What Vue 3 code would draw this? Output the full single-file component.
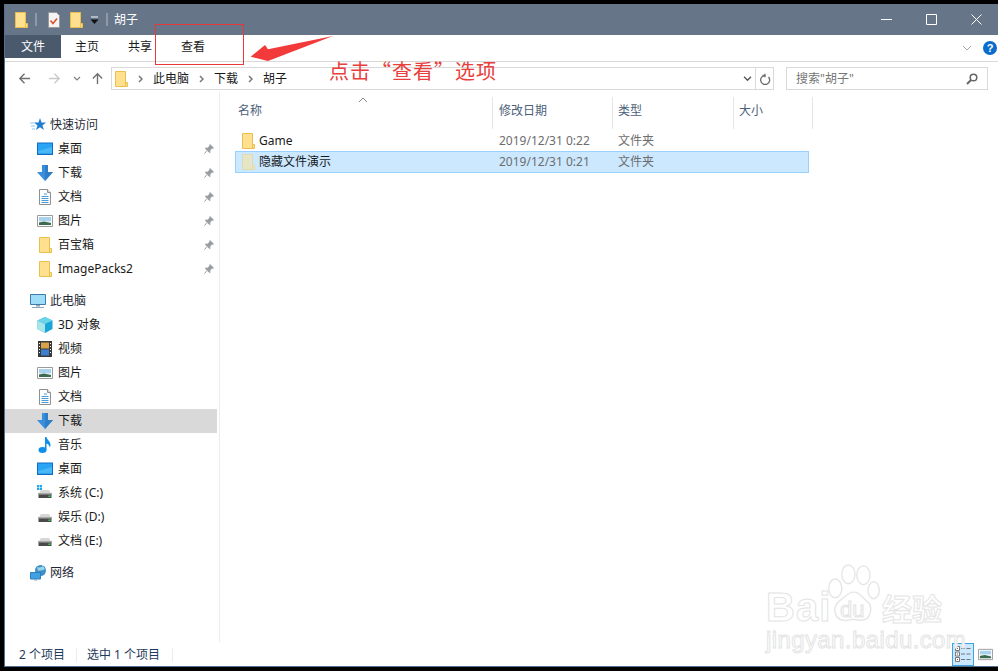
<script setup>
const quick = [
  { icon: 'desktop', label: '桌面' },
  { icon: 'down', label: '下载' },
  { icon: 'doc', label: '文档' },
  { icon: 'pic', label: '图片' },
  { icon: 'folder', label: '百宝箱' },
  { icon: 'folder', label: 'ImagePacks2' },
]
const pc = [
  { icon: 'cube', label: '3D 对象' },
  { icon: 'film', label: '视频' },
  { icon: 'pic', label: '图片' },
  { icon: 'doc', label: '文档' },
  { icon: 'down', label: '下载', active: true },
  { icon: 'music', label: '音乐' },
  { icon: 'desktop', label: '桌面' },
  { icon: 'sysdrive', label: '系统 (C:)' },
  { icon: 'drive', label: '娱乐 (D:)' },
  { icon: 'drive', label: '文档 (E:)' },
]
const files = [
  { name: 'Game', date: '2019/12/31 0:22', type: '文件夹' },
  { name: '隐藏文件演示', date: '2019/12/31 0:21', type: '文件夹', selected: true },
]
const crumbs = ['此电脑', '下载', '胡子']
</script>

<template>
  <div class="page">
    <svg class="defs" width="0" height="0">
      <defs>
        <symbol id="folder" viewBox="0 0 16 16">
          <path d="M2.5.5h10v15h-10z" fill="#ffe08e" stroke="#e9c04e" />
          <path d="M12.5 11.5h2v4h-2z" fill="#ffe08e" stroke="#e9c04e" />
        </symbol>
        <symbol id="folderHidden" viewBox="0 0 16 16">
          <path d="M2.5.5h10v15h-10z" fill="#e6e6c6" stroke="#dcdcb4" />
          <path d="M12.5 11.5h2v4h-2z" fill="#e6e6c6" stroke="#e4dca0" />
        </symbol>
        <symbol id="desktop" viewBox="0 0 16 16">
          <path d="M0 1.5h16v12.5H0z" fill="#0f6fc6" />
          <path d="M1 2.5h14v10H1z" fill="#2aa4f4" />
          <path d="M1 10l14-4v6.500H1z" fill="#49b8f8" />
        </symbol>
        <symbol id="down" viewBox="0 0 16 16">
          <path d="M5 0h6v7h5l-8 9-8-9h5z" fill="#3a8fdc" />
          <path d="M8 0h3v7h5l-8 9z" fill="#2f7ec8" />
        </symbol>
        <symbol id="doc" viewBox="0 0 16 16">
          <path d="M2.500.5h8l3 3v12h-11z" fill="#fff" stroke="#8f8f8f" />
          <path d="M10.500.5v3h3" fill="#e4e4e4" stroke="#8f8f8f" />
          <path d="M7 5h3M4.500 7.500h7M4.500 9.500h7M4.500 11.500h7M4.500 13.500h7" stroke="#4a9bd8" />
        </symbol>
        <symbol id="pic" viewBox="0 0 16 16">
          <path d="M.5 2.500h15v11H.5z" fill="#fff" stroke="#9a9a9a" />
          <path d="M2 4h12v4H2z" fill="#a9d2ee" />
          <path d="M2 8h12v1.500H2z" fill="#dfeef2" />
          <path d="M2 9.500l5-1 7 1.500v2H2z" fill="#3d6b4f" />
        </symbol>
        <symbol id="cube" viewBox="0 0 16 16">
          <path d="M8 0l7.500 3.500v8.500L8 16 .5 12V3.500z" fill="#1aa5d8" />
          <path d="M8 7L.5 3.500V12L8 16z" fill="#a8e6ec" />
          <path d="M8 0l7.500 3.500L8 7 .5 3.500z" fill="#6bd4e8" />
        </symbol>
        <symbol id="film" viewBox="0 0 16 16">
          <path d="M1 0h14v16H1z" fill="#3a3a3a" />
          <path d="M4 1.500h8v6H4z" fill="#d8a24a" />
          <path d="M4 8.500h8v6H4z" fill="#3f7fd0" />
          <path d="M2 2h1v1H2zM2 5h1v1H2zM2 8h1v1H2zM2 11h1v1H2zM13 2h1v1h-1zM13 5h1v1h-1zM13 8h1v1h-1zM13 11h1v1h-1z" fill="#fff" />
        </symbol>
        <symbol id="music" viewBox="0 0 16 16">
          <ellipse cx="5.500" cy="13" rx="4" ry="3" fill="#0f8fe8" />
          <path d="M8 0h1.500c.5 3 4 4 4 8 0 1-.5 2-1 2.500.3-2-1.500-3.500-3-4V13H8z" fill="#0f8fe8" />
        </symbol>
        <symbol id="drive" viewBox="0 0 16 16">
          <path d="M2 8l2-3h8l2 3z" fill="#d6d6d6" />
          <path d="M1.500 8h13v5h-13z" fill="#4a4a4a" />
          <path d="M1.500 8h13v1.500h-13z" fill="#a8a8a8" />
          <path d="M11.500 10.500h2v1.500h-2z" fill="#3ecf5a" />
        </symbol>
        <symbol id="sysdrive" viewBox="0 0 16 16">
          <path d="M2 8l2-3h8l2 3z" fill="#d6d6d6" />
          <path d="M1.500 8h13v5h-13z" fill="#4a4a4a" />
          <path d="M1.500 8h13v1.500h-13z" fill="#a8a8a8" />
          <path d="M11.500 10.500h2v1.500h-2z" fill="#3ecf5a" />
          <path d="M0 0h2.200v2.200H0zM2.800 0H5v2.200H2.800zM0 2.800h2.200V5H0zM2.800 2.800H5V5H2.800z" fill="#1ea7ee" />
        </symbol>
        <symbol id="star" viewBox="0 0 16 16">
          <path d="M10 1l1.500 4.500H16l-3.600 2.900L14 13l-4-2.800L6 13l1.500-4.600L4 5.500h4.500z" fill="#1e7fd0" />
          <path d="M0 6h4M1 9h4M2 12h3" stroke="#8ccbf4" />
        </symbol>
        <symbol id="monitor" viewBox="0 0 16 16">
          <path d="M.500 1.500h15v10H.500z" fill="#9fdcf8" stroke="#3f7da8" />
          <path d="M6 12h4v1.500H6zM2 14h12v1H2z" fill="#8ea3b5" />
        </symbol>
        <symbol id="net" viewBox="0 0 16 16">
          <circle cx="10.500" cy="5.500" r="5.500" fill="#3d8fc8" />
          <path d="M7 2c2 1 5 0 6-1l2 3c-2 2-5 1-7 2z" fill="#9bd2ea" />
          <path d="M.500 7.500h10v6.500H.500z" fill="#3fa0e4" stroke="#2f7fb8" />
          <path d="M4 14.500h3v1H4z" fill="#8ea3b5" />
        </symbol>
        <symbol id="pin" viewBox="0 0 10 10">
          <path d="M6 0l4 4-1 .800-.800-.300L6.200 6.500 6.500 8.500 5.500 9 1 4.500 1.500 3.500 3.500 3.800 5.500 1.800 5.200 1z" fill="#9a9ea3" />
          <path d="M3 6.500L.500 9.500" stroke="#9a9ea3" />
        </symbol>
      </defs>
    </svg>

    <div class="window">
      <header class="titlebar">
        <svg class="ti first"><use href="#folder" /></svg>
        <span class="tsep"></span>
        <svg class="ti doc" viewBox="0 0 12 16">
          <path d="M.5.5h8l3 3v12H.500z" fill="#f4f4f4" stroke="#999" />
          <path d="M2.500 8.500l2.500 3 4-5" fill="none" stroke="#d8502a" stroke-width="1.500" />
        </svg>
        <svg class="ti fold2"><use href="#folder" /></svg>
        <svg class="drop" viewBox="0 0 9 9">
          <path d="M1 1h7" stroke="#fff" />
          <path d="M.5 3.500h8l-4 4.500z" fill="#111" />
        </svg>
        <span class="tsep sep2"></span>
        <span class="ttext">胡子</span>
        <div class="winctl">
          <svg viewBox="0 0 11 11"><path d="M0 5.500h11" stroke="#fff" /></svg>
          <svg viewBox="0 0 11 11"><path d="M.5.500h10v10H.500z" fill="none" stroke="#fff" /></svg>
          <svg viewBox="0 0 11 11"><path d="M.5.500l10 10M10.500.500l-10 10" stroke="#fff" /></svg>
        </div>
      </header>

      <nav class="ribbon">
        <span class="tab file">文件</span>
        <span class="tab home">主页</span>
        <span class="tab share">共享</span>
        <span class="tab view">查看</span>
        <svg class="rib-chev" viewBox="0 0 10 6"><path d="M1 1l4 4 4-4" fill="none" stroke="#a8a8a8" /></svg>
        <span class="help">?</span>
      </nav>

      <div class="addrbar">
        <svg class="nav back" viewBox="0 0 14 14"><path d="M13 7H2M7 2L2 7l5 5" fill="none" stroke="#6f6f6f" stroke-width="1.500" /></svg>
        <svg class="nav fwd" viewBox="0 0 14 14"><path d="M1 7h11M7 2l5 5-5 5" fill="none" stroke="#c9c9c9" stroke-width="1.500" /></svg>
        <svg class="nav-ch" viewBox="0 0 8 6"><path d="M1 1l3 3 3-3" fill="none" stroke="#7f7f7f" stroke-width="1.200" /></svg>
        <svg class="nav up" viewBox="0 0 14 14"><path d="M7 13V2M2 7l5-5 5 5" fill="none" stroke="#6f6f6f" stroke-width="1.500" /></svg>

        <div class="addr">
          <svg class="addr-f"><use href="#folder" /></svg>
          <template v-for="c in crumbs" :key="c">
            <svg class="crumb-ch" viewBox="0 0 5 8"><path d="M1 1l3 3-3 3" fill="none" stroke="#777" stroke-width="1.500" /></svg>
            <span class="crumb">{{ c }}</span>
          </template>
          <svg class="addr-dd" viewBox="0 0 10 7"><path d="M1 1l4 4 4-4" fill="none" stroke="#555" stroke-width="1.600" /></svg>
          <span class="addr-div">
            <svg viewBox="0 0 12 12"><path d="M9.500 3.500A4.500 4.500 0 1 1 6 2H3.500M6 .2v3.600" transform="translate(0 .5)" fill="none" stroke="#6b6b6b" stroke-width="1.300" /></svg>
          </span>
        </div>

        <div class="search">
          <span>搜索"胡子"</span>
          <svg viewBox="0 0 12 12"><circle cx="7.500" cy="4.500" r="3.300" fill="none" stroke="#666" stroke-width="1.500" /><path d="M5 7l-4 4" stroke="#666" stroke-width="2" /></svg>
        </div>
      </div>

      <div class="main">
        <aside class="side">
          <div class="head"><svg class="hi"><use href="#star" /></svg>快速访问</div>
          <div v-for="r in quick" :key="r.label" class="row">
            <svg class="ri"><use :href="'#' + r.icon" /></svg>
            <span class="rt">{{ r.label }}</span>
            <svg class="pin"><use href="#pin" /></svg>
          </div>
          <div class="head gap"><svg class="hi"><use href="#monitor" /></svg>此电脑</div>
          <div v-for="r in pc" :key="r.icon + r.label" class="row" :class="{ active: r.active }">
            <svg class="ri"><use :href="'#' + r.icon" /></svg>
            <span class="rt">{{ r.label }}</span>
          </div>
          <div class="head gap"><svg class="hi"><use href="#net" /></svg>网络</div>
        </aside>

        <section class="list">
          <div class="cols">
            <span class="c-name">名称<svg class="sort" viewBox="0 0 10 6"><path d="M1 5l4-4 4 4" fill="none" stroke="#8a8a8a" /></svg></span>
            <span class="c-date">修改日期</span>
            <span class="c-type">类型</span>
            <span class="c-size">大小</span>
          </div>
          <div class="files">
            <div v-for="f in files" :key="f.name" class="file-row" :class="{ sel: f.selected }">
              <svg class="fi"><use :href="f.selected ? '#folderHidden' : '#folder'" /></svg>
              <span class="f-name">{{ f.name }}</span>
              <span class="f-date">{{ f.date }}</span>
              <span class="f-type">{{ f.type }}</span>
            </div>
          </div>
        </section>
      </div>

      <footer class="status">
        <span class="s1">2 个项目</span>
        <span class="s2">选中 1 个项目</span>
        <div class="views">
          <span class="v-on">
            <svg viewBox="0 0 16 18">
              <path d="M.5 1.500h4v4h-4zM.5 7h4v4h-4zM.5 12.500h4v4h-4z" fill="#fff" stroke="#777" />
              <path d="M2 3h1v1H2zM2 8.500h1v1H2z" fill="#555" />
              <path d="M2 14h1v1H2z" fill="#d22" />
              <path d="M6 3.500h4M11.500 3.500h4M6 9h4M11.500 9h4M6 14.500h4M11.500 14.500h4" stroke="#777" />
            </svg>
          </span>
          <svg class="v-off"><use href="#pic" /></svg>
        </div>
      </footer>
    </div>

    <div class="redbox"></div>
    <svg class="arrow" viewBox="0 0 84 28"><path d="M.7 21.700L15 10l3 4.300L83 1 18 26z" fill="#f23a3a" /></svg>
    <div class="note">点击“查看”选项</div>

    <div class="mark">
      <span class="bai">Bai</span>
      <svg class="paw" viewBox="0 0 60 64">
        <g fill="none" stroke="#e6e6e6" stroke-width="1.500">
          <ellipse cx="10" cy="26" rx="7" ry="10" />
          <ellipse cx="24" cy="11" rx="7" ry="10" />
          <ellipse cx="40" cy="12" rx="7" ry="10" />
          <ellipse cx="51" cy="28" rx="6" ry="9" />
          <path d="M30 30c6 0 8 5 13 9 8 6 6 21-6 21-3 0-5-1-8-1s-6 2-10 1C9 59 6 46 15 39c6-4 8-9 15-9z" />
        </g>
      </svg>
      <span class="du">du</span>
      <span class="jy">经验</span>
      <span class="url">jingyan.baidu.com</span>
    </div>
  </div>
</template>

<style scoped>
.page {
  position: relative;
  width: 998px;
  height: 671px;
  background: #000;
  padding: 4px 0 4px 4px;
  box-sizing: border-box;
  overflow: hidden;
  font: 12px/1 "Noto Sans", "Noto Sans CJK SC", sans-serif;
  color: #1a1a1a;
}
.defs { position: absolute; }
.window {
  height: 663px;
  display: flex;
  flex-direction: column;
  background: #fff;
  border-left: 1px solid #55708f;
  border-bottom: 1px solid #55708f;
  box-sizing: border-box;
}
.titlebar {
  height: 31px;
  flex: none;
  display: flex;
  align-items: center;
  background: #667588;
  color: #fff;
  padding-left: 8px;
}
.ti { width: 16px; height: 16px; flex: none; }
.first { margin-top: 1px; }
.tsep { width: 2px; height: 13px; background: #8d99a8; margin-left: 6px; flex: none; }
.doc { width: 12px; margin-left: 11px; }
.fold2 { margin-left: 8px; margin-top: 1px; }
.drop { width: 9px; height: 9px; margin-left: 6px; margin-top: 1px; }
.sep2 { margin-left: 7px; }
.ttext { margin-left: 6px; font-size: 12px; color: #fff; }
.winctl { margin-left: auto; display: flex; gap: 34px; padding-right: 16px; }
.winctl svg { width: 11px; height: 11px; display: block; }

.ribbon {
  height: 27px;
  flex: none;
  display: flex;
  align-items: flex-start;
  border-bottom: 1px solid #d9d9d9;
  box-sizing: border-box;
  position: relative;
}
.tab { height: 23px; line-height: 24px; text-align: center; flex: none; }
.file { width: 56px; background: #4a5a6c; color: #fff; }
.home { width: 52px; }
.share { width: 54px; }
.view { width: 52px; }
.rib-chev { width: 10px; height: 6px; margin: 10px 0 0 auto; }
.help {
  width: 14px;
  height: 14px;
  margin: 6px 1px 0 11px;
  border-radius: 50%;
  background: #0a6ccc;
  color: #fff;
  font: bold 11px/14px "Liberation Sans", sans-serif;
  text-align: center;
}

.addrbar {
  height: 30px;
  flex: none;
  display: flex;
  align-items: flex-start;
  padding-top: 5px;
  box-sizing: border-box;
  position: relative;
}
.nav { width: 13px; height: 13px; flex: none; margin-top: 5px; }
.back { margin-left: 13px; }
.fwd { margin-left: 17px; }
.nav-ch { width: 8px; height: 6px; margin: 9px 0 0 12px; flex: none; }
.up { margin-left: 10px; }
.addr {
  width: 663px;
  height: 23px;
  margin-left: 7px;
  border: 1px solid #d9d9d9;
  box-sizing: border-box;
  display: flex;
  align-items: center;
  flex: none;
}
.addr-f { width: 16px; height: 16px; margin: 0 -1px 0 1px; flex: none; }
.crumb-ch { width: 5px; height: 8px; margin-left: 10px; flex: none; }
.crumb { margin-left: 10px; }
.addr-dd { width: 9px; height: 6px; margin-left: auto; margin-right: 3px; }
.addr-div {
  width: 17px;
  height: 21px;
  border-left: 1px solid #d9d9d9;
  display: flex;
  align-items: center;
  justify-content: center;
}
.addr-div svg { width: 12px; height: 12px; }
.search {
  width: 202px;
  height: 23px;
  margin-left: 12px;
  border: 1px solid #d9d9d9;
  box-sizing: border-box;
  display: flex;
  align-items: center;
  justify-content: space-between;
  padding: 0 9px 0 9px;
  color: #777;
  flex: none;
}
.search svg { width: 12px; height: 12px; }

.main { flex: 1; display: flex; min-height: 0; }
.side {
  width: 215px;
  flex: none;
  box-sizing: border-box;
  border-right: 1px solid #ececec;
  padding-top: 21px;
}
.head {
  height: 24px;
  display: flex;
  align-items: center;
  padding-left: 25px;
  color: #1f2a36;
}
.head.gap { margin-top: 8px; }
.hi { width: 16px; height: 16px; margin-right: 4px; flex: none; }
.row {
  height: 24px;
  width: 212px;
  display: flex;
  align-items: center;
  padding-left: 32px;
  box-sizing: border-box;
  color: #1a1a1a;
}
.row.active { background: #d9d9d9; }
.ri { width: 16px; height: 16px; flex: none; margin-right: 5px; }
.rt { flex: 1; }
.pin { width: 10px; height: 10px; margin-right: 3px; flex: none; }

.list { flex: 1; padding-left: 15px; min-width: 0; }
.cols {
  height: 32px;
  margin-top: 5px;
  display: flex;
  align-items: center;
  color: #4c607a;
}
.cols span { height: 100%; box-sizing: border-box; display: flex; align-items: center; padding-left: 5px; padding-bottom: 4px; border-right: 1px solid #e5e5e5; position: relative; flex: none; }
.cols .c-name { width: 258px; padding-left: 3px; }
.cols .c-date { width: 120px; padding-left: 6px; }
.cols .c-type { width: 121px; padding-left: 5px; }
.cols .c-size { width: 79px; padding-left: 5px; }
.sort { position: absolute; left: 123px; top: 0; width: 10px; height: 6px; }
.files { padding-top: 1px; }
.file-row {
  width: 574px;
  height: 22px;
  display: flex;
  align-items: center;
  box-sizing: border-box;
  border: 1px solid transparent;
}
.file-row + .file-row { margin-top: -1px; }
.file-row.sel { background: #cce8ff; border-color: #99d1ff; }
.fi { width: 16px; height: 16px; margin-left: 4px; flex: none; }
.f-name { width: 240px; margin-left: 3px; flex: none; color: #1a1a1a; }
.f-date { width: 119px; color: #6d6d6d; flex: none; }
.f-type { color: #6d6d6d; }

.status {
  height: 24px;
  flex: none;
  display: flex;
  align-items: center;
  position: relative;
  color: #1f3a5a;
}
.s1 { margin: 1px 0 0 14px; width: 57px; border-right: 1px solid #ececec; line-height: 14px; }
.s2 { margin: 1px 0 0 10px; width: 85px; border-right: 1px solid #ececec; line-height: 14px; }
.views { margin-left: auto; display: flex; align-items: center; padding-right: 5px; gap: 4px; }
.v-on {
  width: 22px;
  height: 23px;
  box-sizing: border-box;
  border: 1px solid #3ba4e0;
  background: #cce8ff;
  display: flex;
  align-items: center;
  justify-content: center;
}
.v-on svg { width: 16px; height: 18px; }
.v-off { width: 15px; height: 15px; }

.redbox {
  position: absolute;
  left: 155px;
  top: 24px;
  width: 89px;
  height: 41px;
  border: 1px solid #e8383c;
  box-sizing: border-box;
}
.arrow {
  position: absolute;
  left: 250px;
  top: 35px;
  width: 84px;
  height: 28px;
}
.note {
  position: absolute;
  left: 329px;
  top: 60px;
  font: 20px/22px "Noto Sans CJK SC", sans-serif;
  letter-spacing: 1px;
  color: #e8403c;
  white-space: nowrap;
}
.mark { position: absolute; left: 766px; top: 564px; width: 182px; height: 90px; }
.mark span {
  position: absolute;
  color: #fff;
  -webkit-text-stroke: 1px #e4e4e4;
  white-space: nowrap;
}
.bai { left: 0; top: 24px; font: bold 40px/38px "Liberation Sans", sans-serif; letter-spacing: 1px; }
.paw { position: absolute; left: 58px; top: 0; width: 60px; height: 60px; }
.du { left: 74px; top: 36px; font: 22px/20px "Liberation Sans", sans-serif; }
.jy { left: 116px; top: 27px; font: bold 30px/32px "Noto Sans CJK SC", sans-serif; }
.url { left: 0; top: 64px; font: 24px/24px "Liberation Sans", sans-serif; letter-spacing: .4px; }
</style>
